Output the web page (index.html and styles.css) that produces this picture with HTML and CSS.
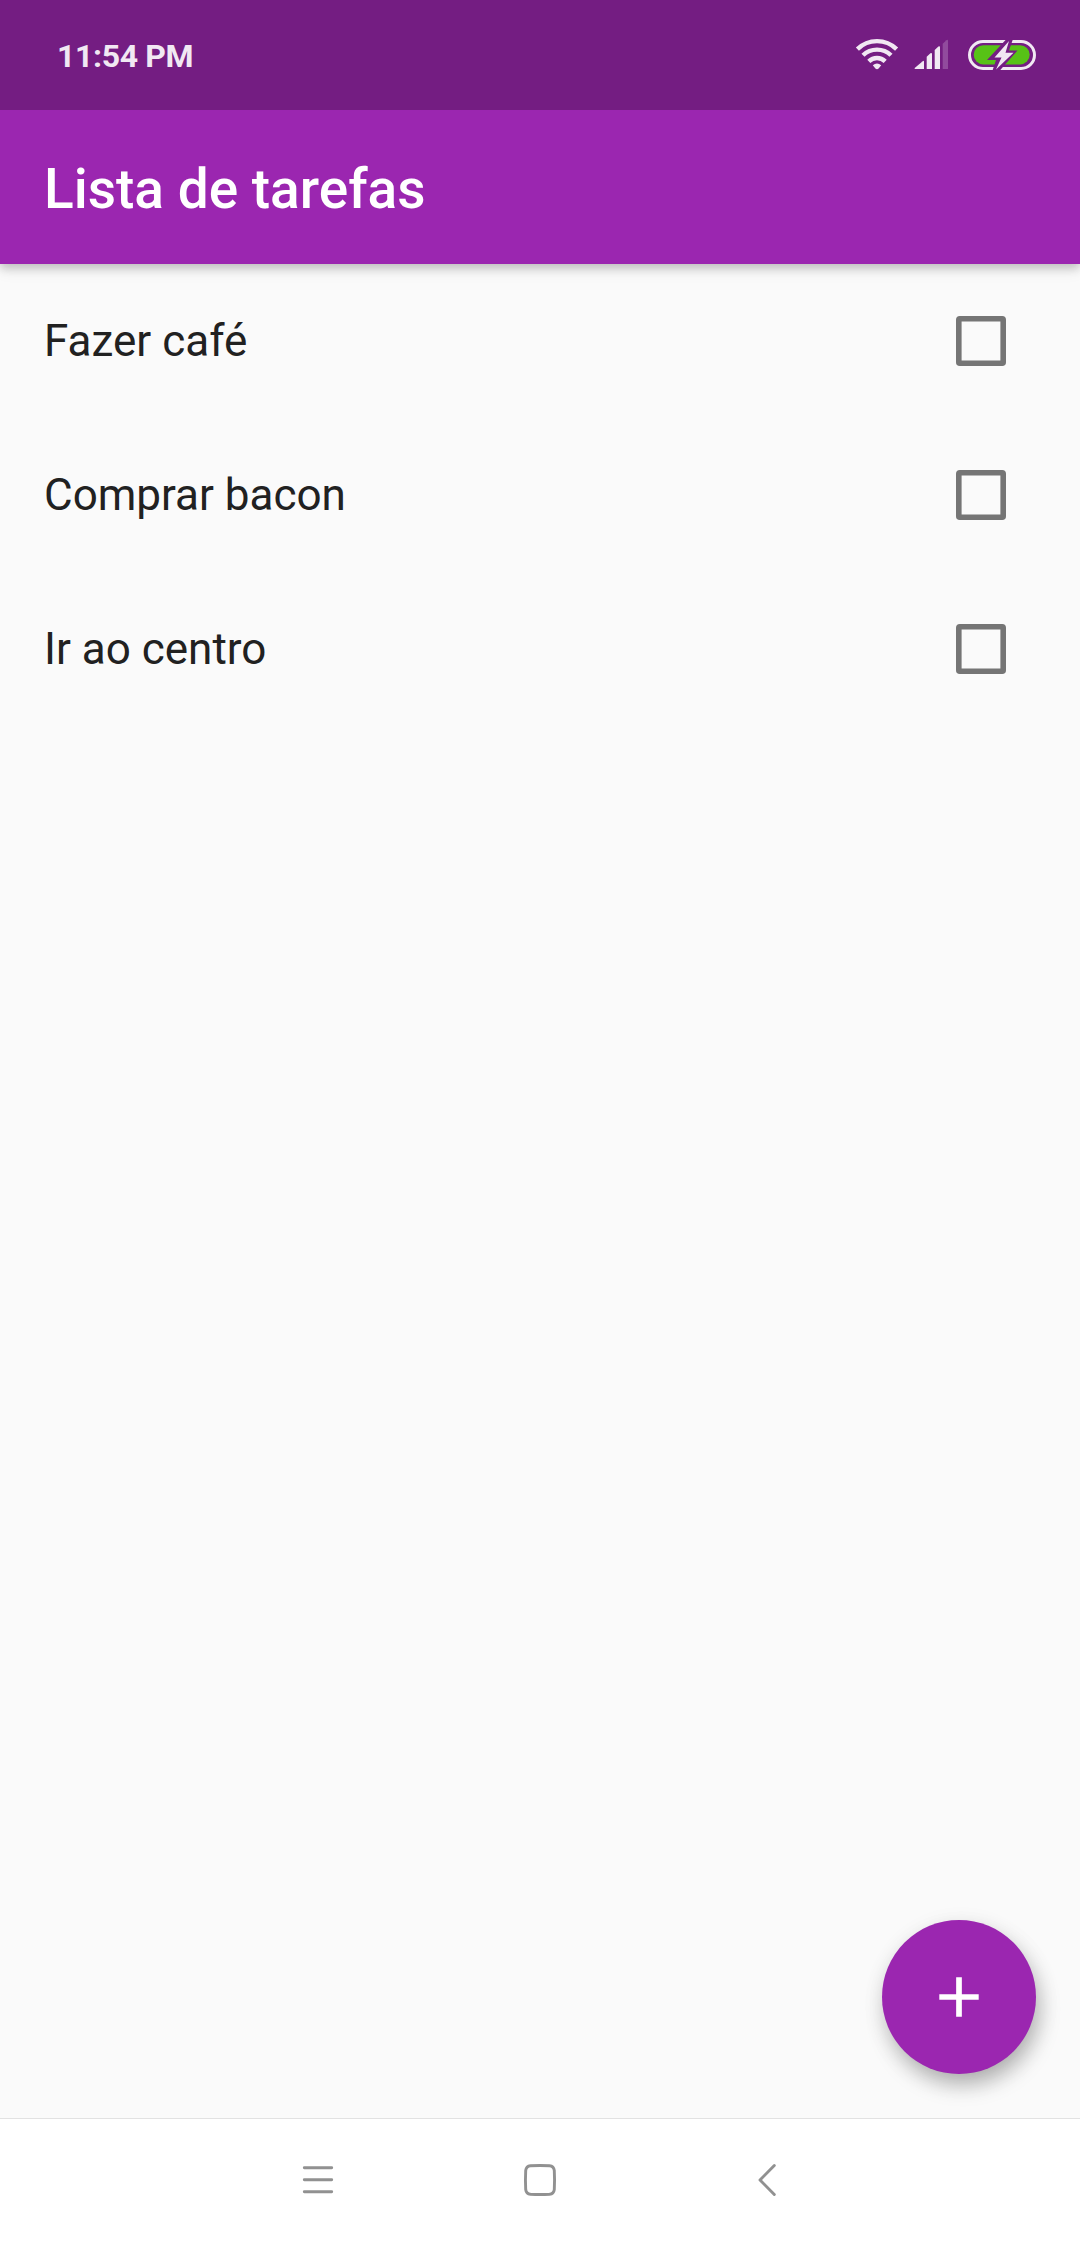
FILE: index.html
```html
<!DOCTYPE html>
<html lang="pt-BR">
<head>
<meta charset="utf-8">
<title>Lista de tarefas</title>
<link rel="stylesheet" href="styles.css">
</head>
<body>
<div class="screen">
  <div class="status-bar">
    <span class="clock">11:54 PM</span>
    <svg class="status-icons" width="184" height="34" viewBox="0 0 184 34">
      <g fill="none" stroke="#f1e8f3" stroke-width="4.4">
        <path d="M2.400 11.100a28 28 0 0 1 39.200 0"/>
        <path d="M8 17.300a20 20 0 0 1 28 0"/>
        <path d="M13.800 23.300a11.800 11.800 0 0 1 16.400 0"/>
      </g>
      <path d="M17.800 27.200q4.200-3.600 8.400 0L23.600 30.600q-1.600 1.400-3.200 0z" fill="#f1e8f3"/>
      <path d="M59.700 31v-1l8-6.800q1.300-1 1.300.6V31z" fill="#f1e8f3"/>
      <path d="M71.700 31V18.800l3.700-3.500q1.600-1 1.600.9V31zM79.700 31V12l3.700-3.500q1.600-1 1.600.9V31z" fill="#f1e8f3"/>
      <path d="M87.700 31V5.700l3.700-3.500q1.600-1 1.600.9V31z" fill="#914b9d"/>
      <rect x="114.500" y="3.500" width="65" height="27" rx="13.500" fill="none" stroke="#f1e8f3" stroke-width="3"/>
      <rect x="118.700" y="7.200" width="56" height="19.200" rx="9.600" fill="#57c216"/>
      <path d="M151.500 1L132 22h9L137 34h6.500L162.500 12.500h-8.500L158 1z" fill="#741d82"/>
      <path d="M154 3L139.500 19.500h7L141 31.500 158.500 14.800h-8z" fill="#f1e8f3"/>
    </svg>
  </div>
  <header class="app-bar"><h1 class="title">Lista de tarefas</h1></header>
  <main class="content">
    <ul class="tasks">
      <li class="task"><span class="label">Fazer café</span><svg class="checkbox" viewBox="0 0 50 50"><rect x="2.800" y="2.800" width="44.400" height="44.400" rx="1"/></svg></li>
      <li class="task"><span class="label">Comprar bacon</span><svg class="checkbox" viewBox="0 0 50 50"><rect x="2.800" y="2.800" width="44.400" height="44.400" rx="1"/></svg></li>
      <li class="task"><span class="label">Ir ao centro</span><svg class="checkbox" viewBox="0 0 50 50"><rect x="2.800" y="2.800" width="44.400" height="44.400" rx="1"/></svg></li>
    </ul>
    <button class="fab" aria-label="Adicionar tarefa">
      <svg width="40" height="40" viewBox="0 0 40 40"><path d="M.3 20h39.400M20 .3v39.400" stroke="#fff" stroke-width="5.700"/></svg>
    </button>
  </main>
  <nav class="nav-bar">
    <svg width="40" height="40" viewBox="0 0 40 40"><path d="M6.300 7.800h27.400M6.300 19.800h27.400M6.300 31.800h27.400"/></svg>
    <svg width="40" height="40" viewBox="0 0 40 40"><path d="M10.500 5.700Q20 5.200 29.500 5.700Q33.800 6.200 34.300 10.500Q34.800 20 34.300 29.500Q33.800 33.800 29.500 34.300Q20 34.800 10.500 34.300Q6.200 33.800 5.700 29.500Q5.200 20 5.700 10.500Q6.200 6.200 10.500 5.700z"/></svg>
    <svg width="40" height="40" viewBox="0 0 40 40"><path d="M32.300 5.600L18 20l14.300 14.400"/></svg>
  </nav>
</div>
</body>
</html>
```
FILE: styles.css
```css
* { box-sizing: border-box; }
body { margin: 0; font-family: Roboto, sans-serif; }
.screen {
  display: flex;
  flex-direction: column;
  width: 1080px;
  height: 2248px;
  background: #fafafa;
  overflow: hidden;
}
.status-bar {
  position: relative;
  z-index: 1;
  display: flex;
  align-items: center;
  justify-content: space-between;
  height: 110px;
  padding: 0 41px 0 57px;
  background: #741d82;
}
.clock {
  color: #f1e8f3;
  font-size: 32px;
  font-weight: 700;
  line-height: 38px;
  letter-spacing: -.35px;
  padding-top: 1px;
}
.status-icons { display: block; }
.app-bar {
  display: flex;
  align-items: center;
  height: 154px;
  padding: 4px 44px 0;
  background: #9b26b0;
  box-shadow: 0 4px 9px rgba(0, 0, 0, .2), 0 8px 14px rgba(0, 0, 0, .06);
}
.title {
  margin: 0;
  color: #fff;
  font-size: 55px;
  font-weight: 500;
  line-height: 64px;
}
.content {
  display: flex;
  flex: 1;
  flex-direction: column;
  justify-content: space-between;
}
.tasks { margin: 0; padding: 0; list-style: none; }
.task {
  display: flex;
  align-items: center;
  justify-content: space-between;
  height: 154px;
  padding: 0 74px 0 44px;
}
.label { color: #212121; font-size: 44px; line-height: 52px; }
.checkbox {
  width: 50px;
  height: 50px;
  fill: none;
  stroke: #757575;
  stroke-width: 5.6;
}
.fab {
  display: flex;
  align-items: center;
  justify-content: center;
  align-self: flex-end;
  width: 154px;
  height: 154px;
  margin: 0 44px 44px 0;
  padding: 0;
  border: 0;
  border-radius: 50%;
  background: #9b26b0;
  box-shadow: 4px 12px 22px -2px rgba(0, 0, 0, .28), 2px 6px 24px rgba(0, 0, 0, .08);
}
.nav-bar {
  display: flex;
  align-items: center;
  justify-content: space-between;
  height: 130px;
  padding: 0 298px 7px;
  border-top: 1px solid #e2e2e2;
  background: #fff;
}
.nav-bar path {
  fill: none;
  stroke: #919191;
  stroke-width: 2.900;
  stroke-linecap: round;
  stroke-linejoin: round;
}
```
